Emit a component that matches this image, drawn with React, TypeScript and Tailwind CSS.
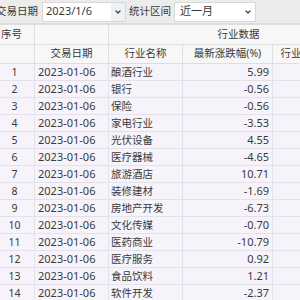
import { ChevronDown } from 'lucide-react';

const rows: [string, string][] = [
  ['酿酒行业', '5.99'],
  ['银行', '-0.56'],
  ['保险', '-0.56'],
  ['家电行业', '-3.53'],
  ['光伏设备', '4.55'],
  ['医疗器械', '-4.65'],
  ['旅游酒店', '10.71'],
  ['装修建材', '-1.69'],
  ['房地产开发', '-6.73'],
  ['文化传媒', '-0.70'],
  ['医药商业', '-10.79'],
  ['医疗服务', '0.92'],
  ['食品饮料', '1.21'],
  ['软件开发', '-2.37'],
];

const font = { fontFamily: '"Noto Sans", "Noto Sans CJK SC", sans-serif' };

export default function App() {
  return (
    <div className="w-[300px] h-[300px] overflow-hidden bg-[#f6f4fa] text-[10.5px] text-[#3a3a3a]" style={font}>
      {/* toolbar */}
      <div className="h-[24px] bg-[#ececec] border-b border-[#dcdcdc] flex items-center -ml-[6px]">
        <span className="w-[48px] pl-[2px] whitespace-nowrap">交易日期</span>
        <div className="w-[84px] h-[20px] bg-white border border-[#d8d8d8] flex items-center pl-[3px] text-[11px]">
          <span className="flex-1">2023/1/6</span>
          <span className="w-[14px] h-full bg-[#eef1f6] flex items-center justify-center">
            <ChevronDown size={8} strokeWidth={4} className="text-[#444]" />
          </span>
        </div>
        <span className="w-[48px] pl-[3px] whitespace-nowrap">统计区间</span>
        <div className="w-[82px] h-[20px] bg-white border border-[#d8d8d8] flex items-center pl-[5px] text-[11px]">
          <span className="flex-1">近一月</span>
          <span className="w-[14px] flex items-center justify-center">
            <ChevronDown size={8} strokeWidth={4} className="text-[#444]" />
          </span>
        </div>
      </div>

      <table className="table-fixed border-collapse -ml-[6px] w-[374px]">
        <colgroup>
          <col className="w-[40px]" />
          <col className="w-[74px]" />
          <col className="w-[74px]" />
          <col className="w-[90px]" />
          <col className="w-[96px]" />
        </colgroup>
        <thead className="bg-[#f7f7f7]">
          <tr className="h-[20px]">
            <th className="border border-[#dedede] font-normal text-left pl-[6px] whitespace-nowrap">序号</th>
            <th className="border border-[#dedede] font-normal" />
            <th colSpan={3} className="border border-[#dedede] font-normal text-center">行业数据</th>
          </tr>
          <tr className="h-[19px]">
            <th className="border border-[#dedede] font-normal" />
            <th className="border border-[#dedede] font-normal text-center">交易日期</th>
            <th className="border border-[#dedede] font-normal text-center">行业名称</th>
            <th className="border border-[#dedede] font-normal text-center whitespace-nowrap">最新涨跌幅(%)</th>
            <th className="border border-[#dedede] font-normal text-center whitespace-nowrap">行业成交额(亿元)</th>
          </tr>
        </thead>
        <tbody>
          {rows.map(([name, pct], i) => (
            <tr key={i} className="h-[17px] leading-[16px]">
              <td className="border border-[#e3e1ea] text-center">{i + 1}</td>
              <td className="border border-[#e3e1ea] pl-[3px] text-[11px]">2023-01-06</td>
              <td className="border border-[#e3e1ea] pl-[2px] whitespace-nowrap overflow-hidden">{name}</td>
              <td className="border border-[#e3e1ea] text-right pr-[3px] text-[11px]">{pct}</td>
              <td className="border border-[#e3e1ea]" />
            </tr>
          ))}
        </tbody>
      </table>
    </div>
  );
}
